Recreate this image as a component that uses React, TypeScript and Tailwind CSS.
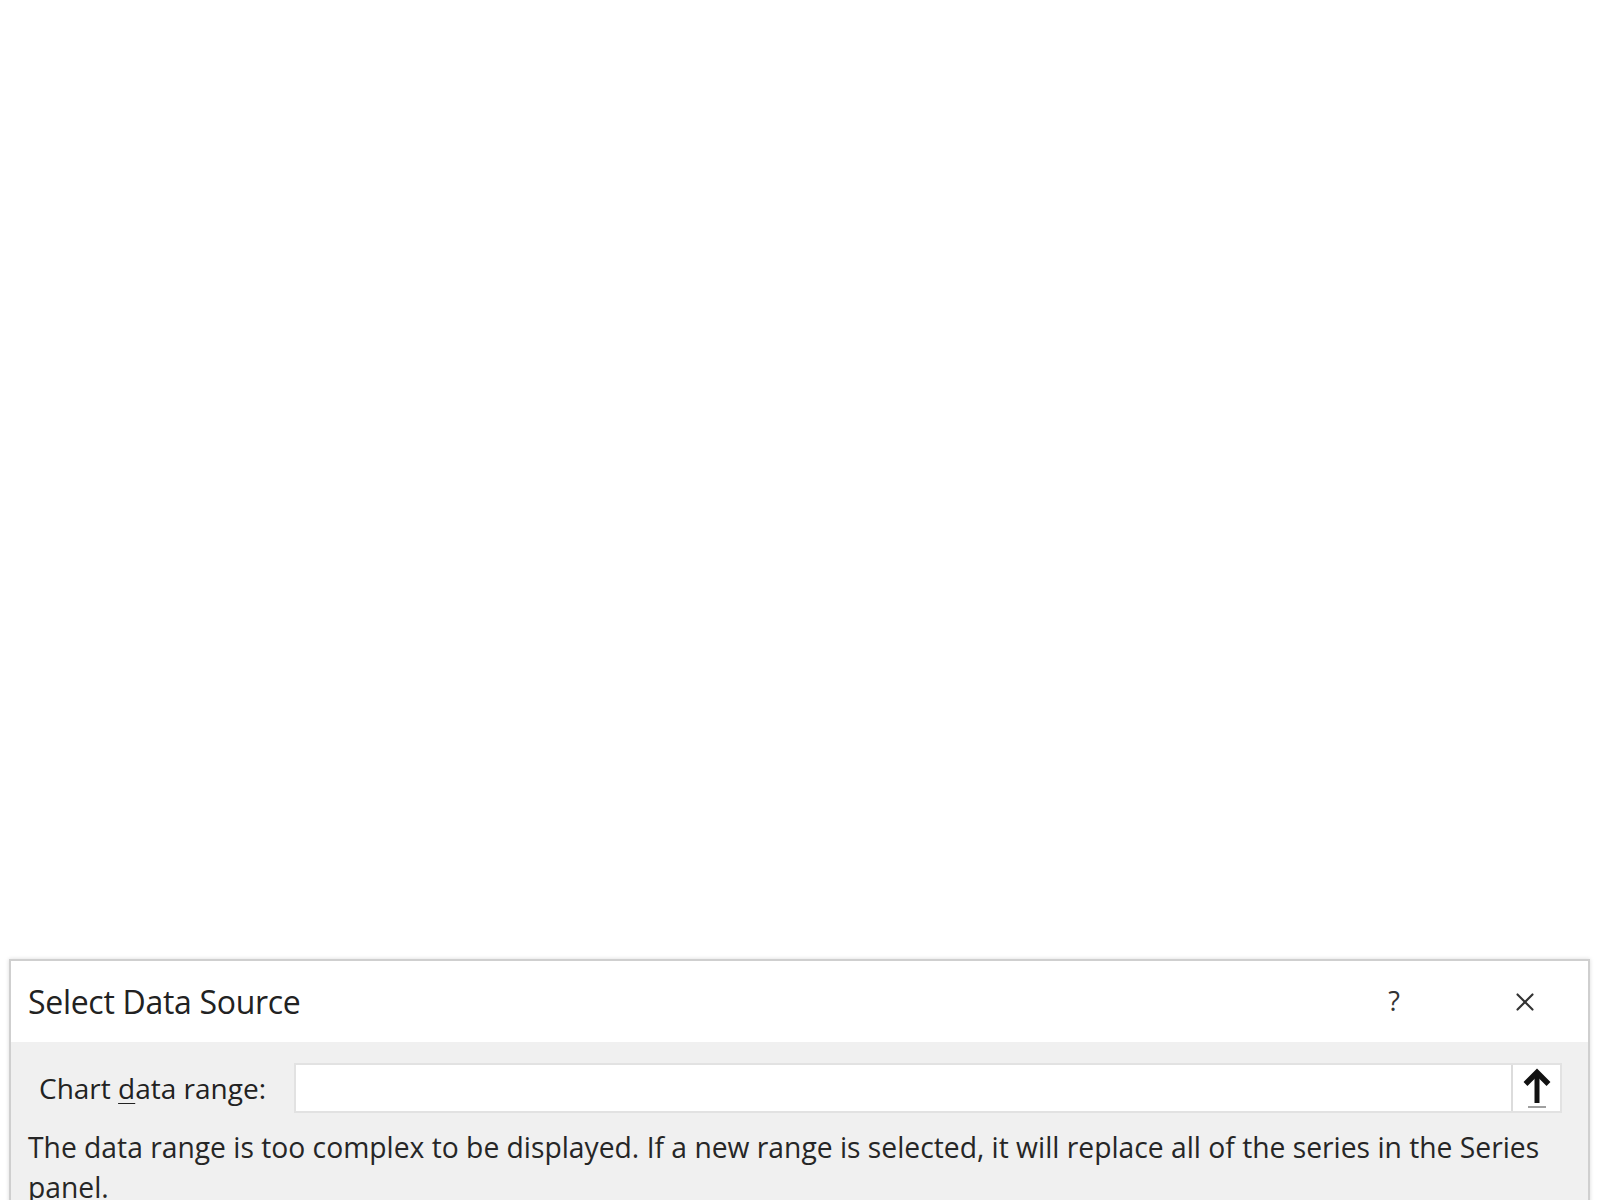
import { X } from 'lucide-react';

const font = { fontFamily: '"Open Sans", "Noto Sans", sans-serif' };

function UploadArrow() {
  return (
    <svg width="30" height="42" viewBox="0 0 30 42" className="block">
      <path d="M15 6 L15 36" stroke="#111" strokeWidth="5" />
      <path d="M3.5 17 L15 5.5 L26.5 17" stroke="#111" strokeWidth="5.5" fill="none" strokeLinejoin="miter" />
      <path d="M6 40 L24 40" stroke="#a0a0a0" strokeWidth="2" />
    </svg>
  );
}

export default function App() {
  return (
    <div className="h-screen w-full overflow-hidden bg-white flex flex-col" style={font}>
      <div className="mt-[959px] ml-[9px] mr-[10px] flex-1 border-2 border-[#cfcfcf] shadow-[0_0_4px_rgba(0,0,0,0.15)] bg-[#f0f0f0] flex flex-col">
        {/* title bar */}
        <div className="h-[81px] bg-white flex items-center pl-[17px] pr-[48px]">
          <span className="flex-1 text-[32px] text-[#222] -tracking-[0.3px]">Select Data Source</span>
          <span className="text-[27px] font-medium text-[#333] mr-[110px]">?</span>
          <X size={30} strokeWidth={1.7} color="#333" />
        </div>
        {/* body */}
        <div className="px-[17px] pt-[21px]">
          <div className="flex items-center">
            <label className="w-[266px] pl-[11px] text-[28px] text-[#222]">
              Chart <span className="underline underline-offset-4 decoration-1">d</span>ata range:
            </label>
            <div className="flex-1 h-[50px] mr-[9px] bg-white border-2 border-[#e2e2e2] flex justify-end">
              <button type="button" className="w-[49px] h-[46px] border-l-2 border-[#dcdcdc] bg-white flex items-center justify-center">
                <UploadArrow />
              </button>
            </div>
          </div>
          <p className="mt-[14px] text-[28.25px] leading-[40px] text-[#262626]">
            The data range is too complex to be displayed. If a new range is selected, it will replace all of the series in the Series panel.
          </p>
        </div>
      </div>
    </div>
  );
}
